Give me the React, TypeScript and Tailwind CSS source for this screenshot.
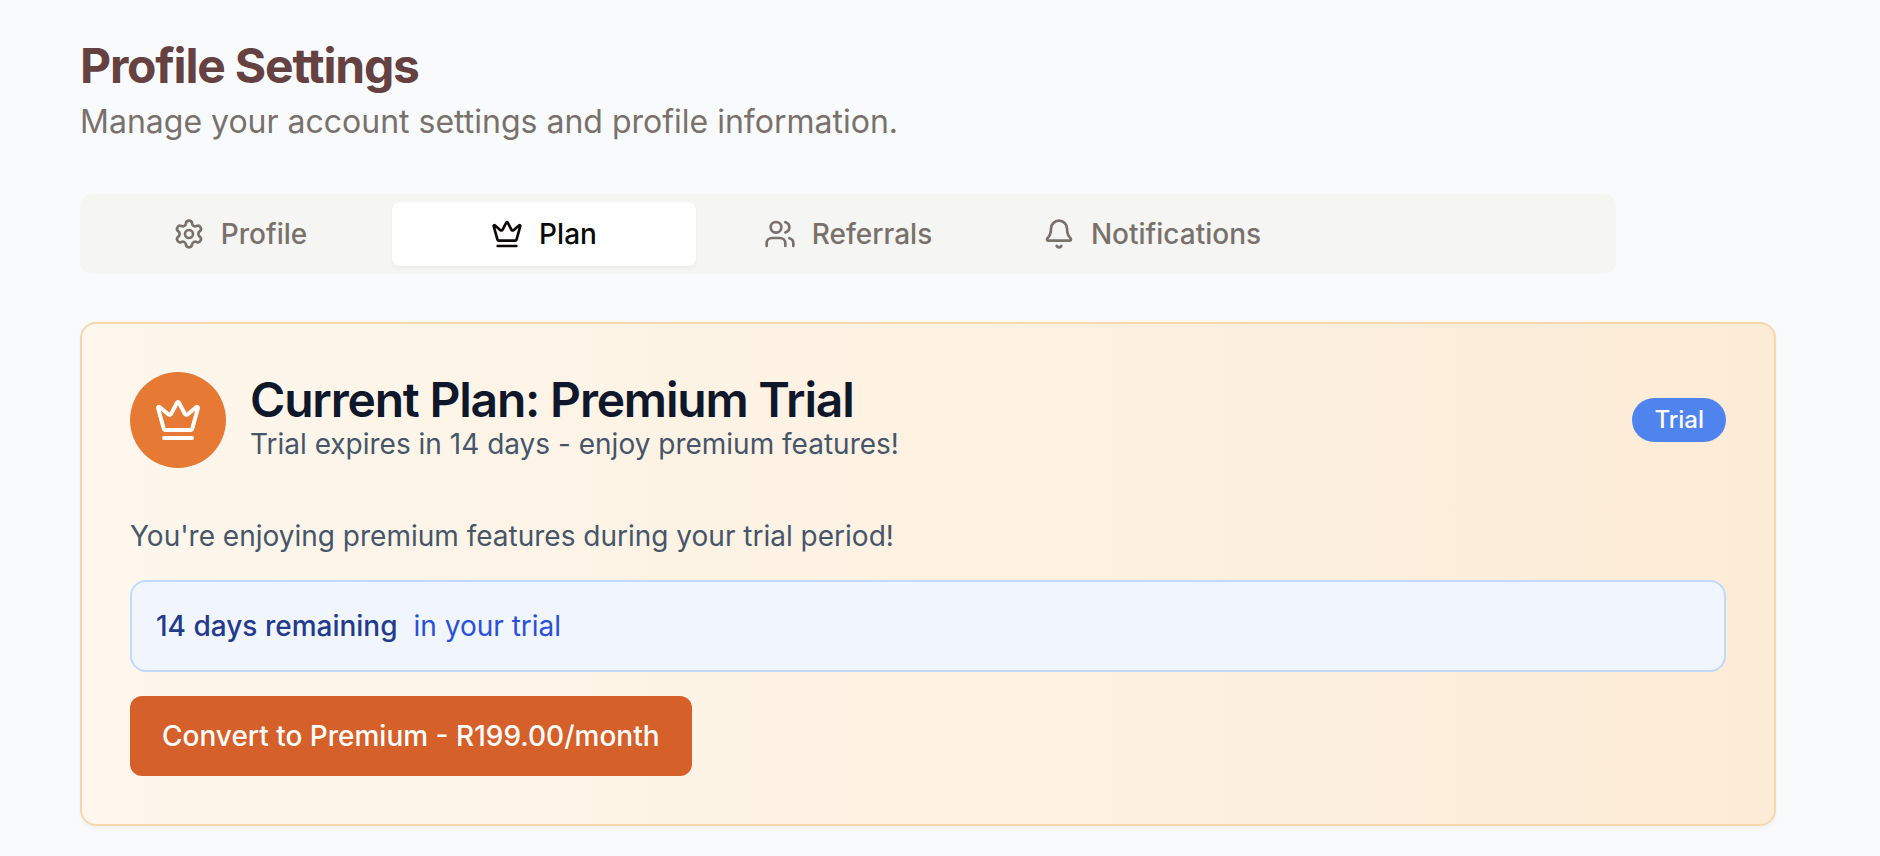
import { Bell, Crown, Settings, Users } from "lucide-react";

const tabs = [
  { label: "Profile", icon: Settings },
  { label: "Plan", icon: Crown },
  { label: "Referrals", icon: Users },
  { label: "Notifications", icon: Bell },
];

export default function App() {
  return (
    <main className="min-h-screen bg-[#f9fafc] px-20 pt-[34px] pb-[30px] font-['Inter',sans-serif] text-[28px] leading-10">
      <header>
        <h1 className="text-5xl leading-[64px] font-bold tracking-tight text-[#654141]">Profile Settings</h1>
        <p className="text-[32px] leading-[48px] text-[#78716c]">
          Manage your account settings and profile information.
        </p>
      </header>

      <div role="tablist" className="mt-12 grid max-w-[1536px] grid-cols-5 rounded-xl bg-[#f5f5f3] p-2">
        {tabs.map(({ label, icon: Icon }) => {
          const active = label === "Plan";
          return (
            <button
              key={label}
              type="button"
              role="tab"
              aria-selected={active}
              className={
                active
                  ? "flex items-center justify-center gap-4 rounded-lg bg-white py-3 font-medium text-[#0c0a09] shadow-[0_2px_4px_rgba(0,0,0,0.05)]"
                  : "flex items-center justify-center gap-4 rounded-lg py-3 font-medium text-[#78716c]"
              }
            >
              <Icon className="size-8 shrink-0" strokeWidth={2} />
              {label}
            </button>
          );
        })}
      </div>

      <section className="mt-12 mr-6 rounded-2xl border-2 border-[#f8d7ae] bg-linear-to-r from-[#fef7ed] to-[#fcecd7] p-12 shadow-[0_2px_4px_rgba(0,0,0,0.05)]">
        <div className="flex items-center justify-between">
          <div className="flex items-center gap-6">
            <div className="flex size-24 items-center justify-center rounded-full bg-[#e67a35] text-white">
              <Crown className="size-12" strokeWidth={2} />
            </div>
            <div>
              <h2 className="text-5xl leading-none font-semibold tracking-tight text-[#0f172a]">
                Current Plan: Premium Trial
              </h2>
              <p className="text-[#475569]">Trial expires in 14 days - enjoy premium features!</p>
            </div>
          </div>
          <span className="rounded-full bg-[#4f84ee] px-[22px] py-1.5 text-2xl leading-8 font-medium text-white">
            Trial
          </span>
        </div>

        <div className="mt-12 flex flex-col items-start gap-6">
          <p className="text-[#475569]">You're enjoying premium features during your trial period!</p>
          <div className="flex w-full gap-4 rounded-2xl border-2 border-[#c0dafc] bg-[#f0f5fe] p-6">
            <span className="font-medium text-[#243a8a]">14 days remaining</span>
            <span className="text-[#2a50d8]">in your trial</span>
          </div>
          <button type="button" className="rounded-xl bg-[#d6602a] px-8 py-5 font-medium text-white">
            Convert to Premium - R199.00/month
          </button>
        </div>
      </section>
    </main>
  );
}
